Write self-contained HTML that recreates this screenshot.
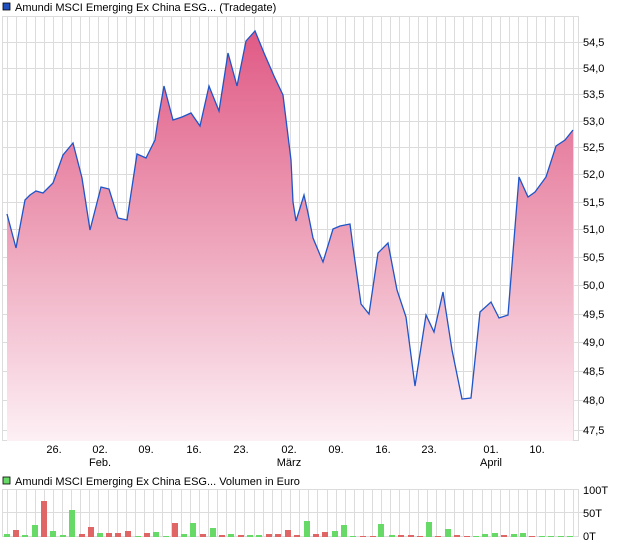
<!DOCTYPE html>
<html><head><meta charset="utf-8"><style>
body{margin:0;background:#fff;width:620px;height:546px;overflow:hidden;font-family:"Liberation Sans",sans-serif}
svg{display:block}
text{font-family:"Liberation Sans",sans-serif;font-size:11px;fill:#000}
</style></head><body>
<svg width="620" height="546" viewBox="0 0 620 546">
<defs>
<linearGradient id="g" x1="0" y1="31" x2="0" y2="441" gradientUnits="userSpaceOnUse">
<stop offset="0" stop-color="#e05a86"/>
<stop offset="0.45" stop-color="#ec9bb4"/>
<stop offset="1" stop-color="#fdf0f5"/>
</linearGradient>
</defs>
<rect x="3" y="3" width="7" height="7" fill="#1f4fbf" stroke="#000" stroke-width="0.8"/>
<text x="15" y="11">Amundi MSCI Emerging Ex China ESG... (Tradegate)</text>
<g id="grid" stroke="#dcdcdc" stroke-width="1">
<script>/* none */</script>
</g>
<g stroke="#dcdcdc" stroke-width="1" fill="none">
<path id="vg" d=""/>
</g>
<!-- price chart frame & grid -->
<rect x="2.5" y="16.5" width="576" height="424" fill="none" stroke="#dcdcdc"/>
<g stroke="#dcdcdc">
<line x1="2" x2="585" y1="42.5" y2="42.5"/><line x1="2" x2="585" y1="68.5" y2="68.5"/><line x1="2" x2="585" y1="94.5" y2="94.5"/><line x1="2" x2="585" y1="121.5" y2="121.5"/><line x1="2" x2="585" y1="147.5" y2="147.5"/><line x1="2" x2="585" y1="174.5" y2="174.5"/><line x1="2" x2="585" y1="202.5" y2="202.5"/><line x1="2" x2="585" y1="229.5" y2="229.5"/><line x1="2" x2="585" y1="257.5" y2="257.5"/><line x1="2" x2="585" y1="285.5" y2="285.5"/><line x1="2" x2="585" y1="314.5" y2="314.5"/><line x1="2" x2="585" y1="342.5" y2="342.5"/><line x1="2" x2="585" y1="371.5" y2="371.5"/><line x1="2" x2="585" y1="400.5" y2="400.5"/><line x1="2" x2="585" y1="430.5" y2="430.5"/>
</g>
<g stroke="#dcdcdc" id="vlines1"></g>
<path d="M7,214 L16,248 L25,200 L30,195 L36,191 L43,193 L53,183 L63,155 L73,143 L82,178 L90,230 L101,187 L109,189 L118,218 L127,220 L137,154 L146,158 L155,140 L158,120 L164,86 L173,120 L182,117 L191,113 L200,126 L209,86 L219,111 L228,53 L237,86 L246,41 L255,31 L264,53 L274,76 L283,95 L291,160 L293,202 L296,221 L304,195 L308,213 L313,238 L323,262 L333,229 L340,226 L350,224 L353,247 L361,304 L369,314 L378,253 L388,243 L397,290 L406,317 L415,386 L426,315 L434,332 L443,292 L452,350 L462,399 L471,398 L480,312 L491,302 L499,318 L508,315 L519,177 L528,197 L535,192 L546,177 L556,146 L565,140 L573,130 L573,441 L7,441 Z" fill="url(#g)"/>
<path d="M7,214 L16,248 L25,200 L30,195 L36,191 L43,193 L53,183 L63,155 L73,143 L82,178 L90,230 L101,187 L109,189 L118,218 L127,220 L137,154 L146,158 L155,140 L158,120 L164,86 L173,120 L182,117 L191,113 L200,126 L209,86 L219,111 L228,53 L237,86 L246,41 L255,31 L264,53 L274,76 L283,95 L291,160 L293,202 L296,221 L304,195 L308,213 L313,238 L323,262 L333,229 L340,226 L350,224 L353,247 L361,304 L369,314 L378,253 L388,243 L397,290 L406,317 L415,386 L426,315 L434,332 L443,292 L452,350 L462,399 L471,398 L480,312 L491,302 L499,318 L508,315 L519,177 L528,197 L535,192 L546,177 L556,146 L565,140 L573,130" fill="none" stroke="#1f55c8" stroke-width="1.3"/>
<g font-size="11">
<text x="583" y="46">54,5</text><text x="583" y="72">54,0</text><text x="583" y="98">53,5</text><text x="583" y="125">53,0</text><text x="583" y="151">52,5</text><text x="583" y="178">52,0</text><text x="583" y="206">51,5</text><text x="583" y="233">51,0</text><text x="583" y="261">50,5</text><text x="583" y="289">50,0</text><text x="583" y="318">49,5</text><text x="583" y="346">49,0</text><text x="583" y="375">48,5</text><text x="583" y="404">48,0</text><text x="583" y="434">47,5</text>
</g>
<g text-anchor="middle">
<text x="54" y="453">26.</text><text x="100" y="453">02.</text><text x="100" y="466">Feb.</text><text x="146" y="453">09.</text><text x="194" y="453">16.</text><text x="241" y="453">23.</text><text x="289" y="453">02.</text><text x="289" y="466">März</text><text x="336" y="453">09.</text><text x="383" y="453">16.</text><text x="429" y="453">23.</text><text x="491" y="453">01.</text><text x="491" y="466">April</text><text x="537" y="453">10.</text>
</g>
<rect x="3" y="477" width="7" height="7" fill="#66d966" stroke="#000" stroke-width="0.8"/>
<text x="15" y="485">Amundi MSCI Emerging Ex China ESG... Volumen in Euro</text>
<rect x="2.5" y="489.5" width="576" height="47" fill="none" stroke="#dcdcdc"/>
<line x1="2" x2="585" y1="512.5" y2="512.5" stroke="#dcdcdc"/>
<g id="vlines2" stroke="#dcdcdc"></g>
<text x="583" y="494">100T</text><text x="583" y="517">50T</text><text x="583" y="540">0T</text>
<g id="bars"></g>
</svg>
<script>
var ns="http://www.w3.org/2000/svg";
function ln(g,x,y1,y2){var l=document.createElementNS(ns,"line");l.setAttribute("x1",x);l.setAttribute("x2",x);l.setAttribute("y1",y1);l.setAttribute("y2",y2);g.appendChild(l);}
var v1=document.getElementById("vlines1"),v2=document.getElementById("vlines2");
for(var i=0;i<=62;i++){var x=Math.round(7.3+9.12*i)+0.5;ln(v1,x,16,441);ln(v2,x,489,537);}
var svg=document.querySelector("svg");svg.insertBefore(v1,svg.querySelector("path[fill]"));
var b=[[7,'g',3],[16,'r',7],[25,'g',2],[35,'g',12],[44,'r',36],[53,'g',6],[63,'g',2],[72,'g',27],[82,'r',3],[91,'r',10],[100,'g',4],[109,'r',4],[118,'r',4],[128,'r',6],[138,'g',1],[147,'r',4],[156,'g',5],[166,'g',1],[175,'r',14],[184,'g',3],[193,'g',14],[203,'r',3],[213,'g',9],[222,'r',2],[231,'g',3],[241,'r',2],[250,'g',2],[259,'g',2],[269,'r',3],[278,'r',3],[288,'r',7],[297,'r',2],[307,'g',16],[316,'r',3],[325,'r',5],[335,'g',6],[344,'g',12],[353,'g',1],[363,'r',1],[373,'r',1],[381,'g',13],[392,'g',2],[401,'r',2],[411,'r',2],[420,'r',1],[429,'g',15],[438,'r',1],[448,'g',8],[457,'r',2],[467,'r',1],[476,'g',1],[485,'g',3],[495,'g',4],[504,'r',2],[514,'g',3],[523,'g',4],[532,'r',1],[542,'g',1],[551,'g',1],[561,'g',1],[570,'g',1]];
var bg=document.getElementById("bars");
b.forEach(function(a){var r=document.createElementNS(ns,"rect");r.setAttribute("x",a[0]-3);r.setAttribute("width",6);r.setAttribute("y",537-a[2]);r.setAttribute("height",a[2]);r.setAttribute("fill",a[1]=='g'?'#66d966':'#e06666');bg.appendChild(r);});
</script>
</body></html>
